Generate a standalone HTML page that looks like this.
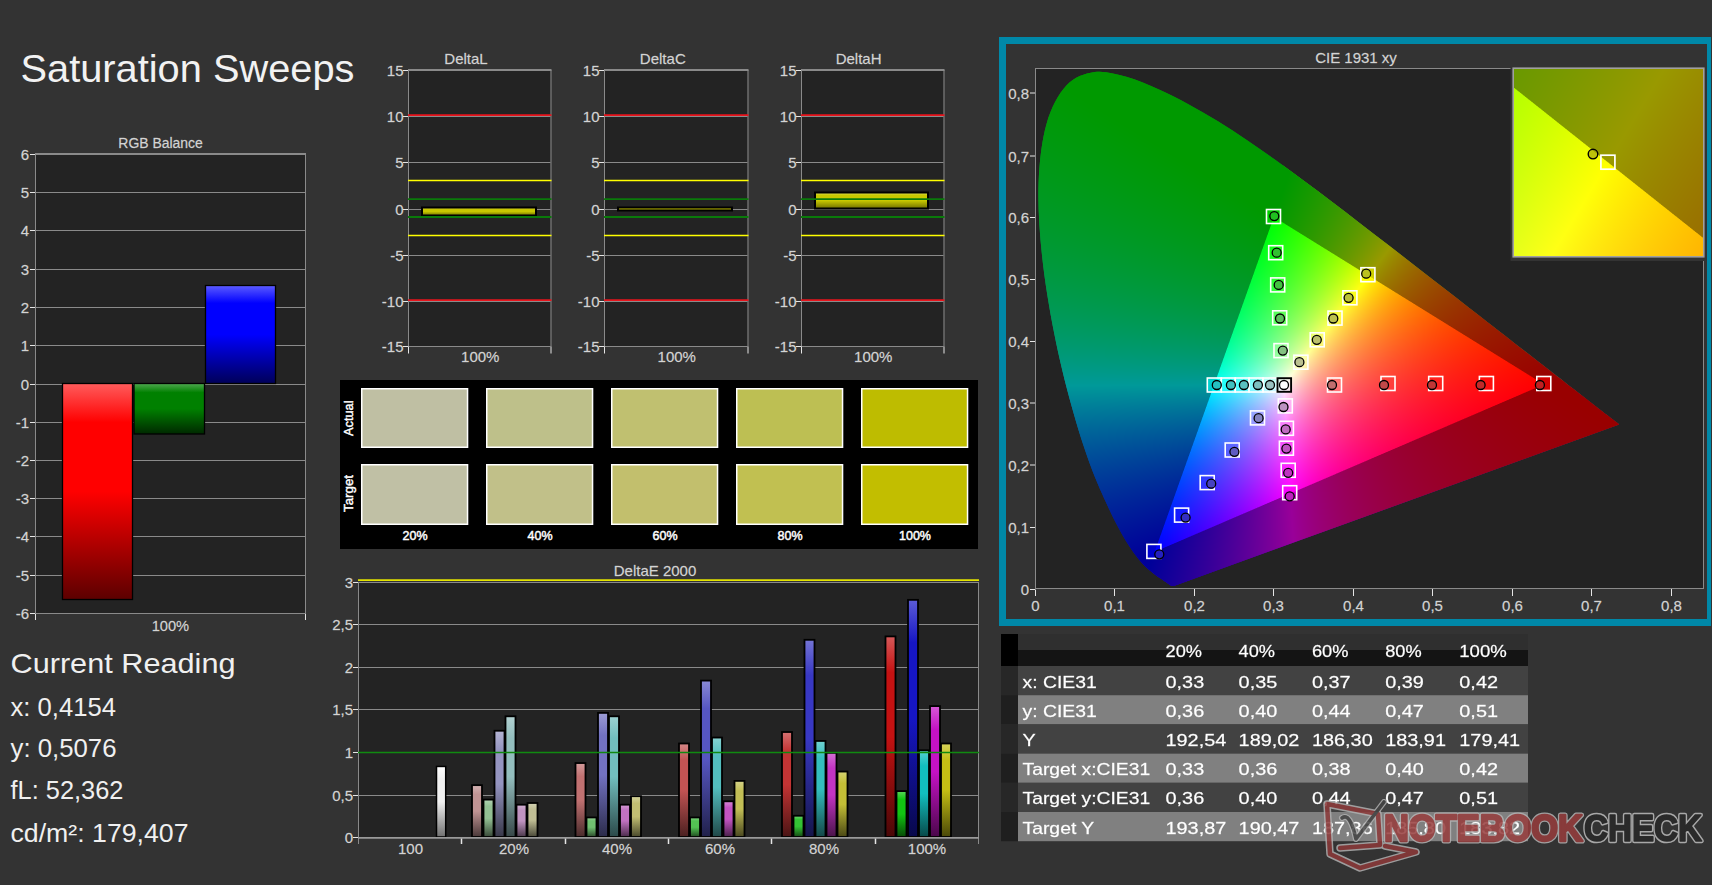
<!DOCTYPE html>
<html><head><meta charset="utf-8"><title>Saturation Sweeps</title>
<style>
html,body{margin:0;padding:0;background:#333333;width:1712px;height:885px;overflow:hidden;}
.layer{position:absolute;left:0;top:0;width:1712px;height:885px;}
svg text{font-family:"Liberation Sans", sans-serif;}
</style></head><body>
<svg class="layer" width="1712" height="885" viewBox="0 0 1712 885">
<defs><linearGradient id="g1" x1="0" y1="0" x2="0" y2="1"><stop offset="0" stop-color="#ff5c5c"/><stop offset="0.18" stop-color="#ff0000"/><stop offset="0.5" stop-color="#ff0000"/><stop offset="1" stop-color="#5c0000"/></linearGradient>
<linearGradient id="g2" x1="0" y1="0" x2="0" y2="1"><stop offset="0" stop-color="#50a850"/><stop offset="0.18" stop-color="#008000"/><stop offset="0.5" stop-color="#008000"/><stop offset="1" stop-color="#002800"/></linearGradient>
<linearGradient id="g3" x1="0" y1="0" x2="0" y2="1"><stop offset="0" stop-color="#5c5cff"/><stop offset="0.18" stop-color="#0000ff"/><stop offset="0.5" stop-color="#0000ff"/><stop offset="1" stop-color="#000058"/></linearGradient>
<linearGradient id="g4" x1="0" y1="0" x2="0" y2="1"><stop offset="0" stop-color="#e0e060"/><stop offset="0.18" stop-color="#c8c800"/><stop offset="0.5" stop-color="#c8c800"/><stop offset="1" stop-color="#707000"/></linearGradient>
<linearGradient id="g5" x1="0" y1="0" x2="0" y2="1"><stop offset="0" stop-color="#e0e060"/><stop offset="0.18" stop-color="#c8c800"/><stop offset="0.5" stop-color="#c8c800"/><stop offset="1" stop-color="#707000"/></linearGradient>
<linearGradient id="g6" x1="0" y1="0" x2="0" y2="1"><stop offset="0" stop-color="#e0e060"/><stop offset="0.18" stop-color="#c8c800"/><stop offset="0.5" stop-color="#c8c800"/><stop offset="1" stop-color="#707000"/></linearGradient>
<linearGradient id="g7" x1="0" y1="0" x2="0" y2="1"><stop offset="0" stop-color="#d3b3b3"/><stop offset="0.18" stop-color="#c09393"/><stop offset="0.5" stop-color="#c09393"/><stop offset="1" stop-color="#493838"/></linearGradient>
<linearGradient id="g8" x1="0" y1="0" x2="0" y2="1"><stop offset="0" stop-color="#b3d3b3"/><stop offset="0.18" stop-color="#93c093"/><stop offset="0.5" stop-color="#93c093"/><stop offset="1" stop-color="#384938"/></linearGradient>
<linearGradient id="g9" x1="0" y1="0" x2="0" y2="1"><stop offset="0" stop-color="#b4b4d3"/><stop offset="0.18" stop-color="#9494c0"/><stop offset="0.5" stop-color="#9494c0"/><stop offset="1" stop-color="#383849"/></linearGradient>
<linearGradient id="g10" x1="0" y1="0" x2="0" y2="1"><stop offset="0" stop-color="#b3d2d2"/><stop offset="0.18" stop-color="#93bebe"/><stop offset="0.5" stop-color="#93bebe"/><stop offset="1" stop-color="#384848"/></linearGradient>
<linearGradient id="g11" x1="0" y1="0" x2="0" y2="1"><stop offset="0" stop-color="#d3b3d3"/><stop offset="0.18" stop-color="#c093c0"/><stop offset="0.5" stop-color="#c093c0"/><stop offset="1" stop-color="#493849"/></linearGradient>
<linearGradient id="g12" x1="0" y1="0" x2="0" y2="1"><stop offset="0" stop-color="#d3d2b4"/><stop offset="0.18" stop-color="#c0be94"/><stop offset="0.5" stop-color="#c0be94"/><stop offset="1" stop-color="#494838"/></linearGradient>
<linearGradient id="g13" x1="0" y1="0" x2="0" y2="1"><stop offset="0" stop-color="#d49c9c"/><stop offset="0.18" stop-color="#c17171"/><stop offset="0.5" stop-color="#c17171"/><stop offset="1" stop-color="#492b2b"/></linearGradient>
<linearGradient id="g14" x1="0" y1="0" x2="0" y2="1"><stop offset="0" stop-color="#9cd49c"/><stop offset="0.18" stop-color="#71c171"/><stop offset="0.5" stop-color="#71c171"/><stop offset="1" stop-color="#2b492b"/></linearGradient>
<linearGradient id="g15" x1="0" y1="0" x2="0" y2="1"><stop offset="0" stop-color="#9c9cd4"/><stop offset="0.18" stop-color="#7272c1"/><stop offset="0.5" stop-color="#7272c1"/><stop offset="1" stop-color="#2b2b49"/></linearGradient>
<linearGradient id="g16" x1="0" y1="0" x2="0" y2="1"><stop offset="0" stop-color="#9cd2d2"/><stop offset="0.18" stop-color="#71bebe"/><stop offset="0.5" stop-color="#71bebe"/><stop offset="1" stop-color="#2b4848"/></linearGradient>
<linearGradient id="g17" x1="0" y1="0" x2="0" y2="1"><stop offset="0" stop-color="#d49cd4"/><stop offset="0.18" stop-color="#c171c1"/><stop offset="0.5" stop-color="#c171c1"/><stop offset="1" stop-color="#492b49"/></linearGradient>
<linearGradient id="g18" x1="0" y1="0" x2="0" y2="1"><stop offset="0" stop-color="#d4d29c"/><stop offset="0.18" stop-color="#c1be72"/><stop offset="0.5" stop-color="#c1be72"/><stop offset="1" stop-color="#49482b"/></linearGradient>
<linearGradient id="g19" x1="0" y1="0" x2="0" y2="1"><stop offset="0" stop-color="#d48787"/><stop offset="0.18" stop-color="#c25353"/><stop offset="0.5" stop-color="#c25353"/><stop offset="1" stop-color="#4a2020"/></linearGradient>
<linearGradient id="g20" x1="0" y1="0" x2="0" y2="1"><stop offset="0" stop-color="#87d487"/><stop offset="0.18" stop-color="#53c253"/><stop offset="0.5" stop-color="#53c253"/><stop offset="1" stop-color="#204a20"/></linearGradient>
<linearGradient id="g21" x1="0" y1="0" x2="0" y2="1"><stop offset="0" stop-color="#8989d4"/><stop offset="0.18" stop-color="#5656c2"/><stop offset="0.5" stop-color="#5656c2"/><stop offset="1" stop-color="#21214a"/></linearGradient>
<linearGradient id="g22" x1="0" y1="0" x2="0" y2="1"><stop offset="0" stop-color="#87d2d2"/><stop offset="0.18" stop-color="#53bebe"/><stop offset="0.5" stop-color="#53bebe"/><stop offset="1" stop-color="#204848"/></linearGradient>
<linearGradient id="g23" x1="0" y1="0" x2="0" y2="1"><stop offset="0" stop-color="#d487d4"/><stop offset="0.18" stop-color="#c253c2"/><stop offset="0.5" stop-color="#c253c2"/><stop offset="1" stop-color="#4a204a"/></linearGradient>
<linearGradient id="g24" x1="0" y1="0" x2="0" y2="1"><stop offset="0" stop-color="#d4d288"/><stop offset="0.18" stop-color="#c2be55"/><stop offset="0.5" stop-color="#c2be55"/><stop offset="1" stop-color="#4a4820"/></linearGradient>
<linearGradient id="g25" x1="0" y1="0" x2="0" y2="1"><stop offset="0" stop-color="#d57171"/><stop offset="0.18" stop-color="#c33434"/><stop offset="0.5" stop-color="#c33434"/><stop offset="1" stop-color="#4a1414"/></linearGradient>
<linearGradient id="g26" x1="0" y1="0" x2="0" y2="1"><stop offset="0" stop-color="#71d571"/><stop offset="0.18" stop-color="#34c334"/><stop offset="0.5" stop-color="#34c334"/><stop offset="1" stop-color="#144a14"/></linearGradient>
<linearGradient id="g27" x1="0" y1="0" x2="0" y2="1"><stop offset="0" stop-color="#7474d5"/><stop offset="0.18" stop-color="#3838c3"/><stop offset="0.5" stop-color="#3838c3"/><stop offset="1" stop-color="#15154a"/></linearGradient>
<linearGradient id="g28" x1="0" y1="0" x2="0" y2="1"><stop offset="0" stop-color="#71d2d2"/><stop offset="0.18" stop-color="#34bebe"/><stop offset="0.5" stop-color="#34bebe"/><stop offset="1" stop-color="#144848"/></linearGradient>
<linearGradient id="g29" x1="0" y1="0" x2="0" y2="1"><stop offset="0" stop-color="#d571d5"/><stop offset="0.18" stop-color="#c334c3"/><stop offset="0.5" stop-color="#c334c3"/><stop offset="1" stop-color="#4a144a"/></linearGradient>
<linearGradient id="g30" x1="0" y1="0" x2="0" y2="1"><stop offset="0" stop-color="#d5d272"/><stop offset="0.18" stop-color="#c3be36"/><stop offset="0.5" stop-color="#c3be36"/><stop offset="1" stop-color="#4a4815"/></linearGradient>
<linearGradient id="g31" x1="0" y1="0" x2="0" y2="1"><stop offset="0" stop-color="#d65959"/><stop offset="0.18" stop-color="#c41212"/><stop offset="0.5" stop-color="#c41212"/><stop offset="1" stop-color="#4a0707"/></linearGradient>
<linearGradient id="g32" x1="0" y1="0" x2="0" y2="1"><stop offset="0" stop-color="#59d659"/><stop offset="0.18" stop-color="#12c412"/><stop offset="0.5" stop-color="#12c412"/><stop offset="1" stop-color="#074a07"/></linearGradient>
<linearGradient id="g33" x1="0" y1="0" x2="0" y2="1"><stop offset="0" stop-color="#5c5cd6"/><stop offset="0.18" stop-color="#1616c4"/><stop offset="0.5" stop-color="#1616c4"/><stop offset="1" stop-color="#08084a"/></linearGradient>
<linearGradient id="g34" x1="0" y1="0" x2="0" y2="1"><stop offset="0" stop-color="#59d2d2"/><stop offset="0.18" stop-color="#12bebe"/><stop offset="0.5" stop-color="#12bebe"/><stop offset="1" stop-color="#074848"/></linearGradient>
<linearGradient id="g35" x1="0" y1="0" x2="0" y2="1"><stop offset="0" stop-color="#d659d6"/><stop offset="0.18" stop-color="#c412c4"/><stop offset="0.5" stop-color="#c412c4"/><stop offset="1" stop-color="#4a074a"/></linearGradient>
<linearGradient id="g36" x1="0" y1="0" x2="0" y2="1"><stop offset="0" stop-color="#d6d25a"/><stop offset="0.18" stop-color="#c4be14"/><stop offset="0.5" stop-color="#c4be14"/><stop offset="1" stop-color="#4a4808"/></linearGradient>
<linearGradient id="g37" x1="0" y1="0" x2="0" y2="1"><stop offset="0" stop-color="#ffffff"/><stop offset="0.18" stop-color="#f0f0f0"/><stop offset="0.5" stop-color="#f0f0f0"/><stop offset="1" stop-color="#707070"/></linearGradient></defs>
<text x="20.5" y="81.8" font-size="39.5" fill="#f2f2f2" text-anchor="start" font-weight="normal" textLength="334" lengthAdjust="spacingAndGlyphs">Saturation Sweeps</text>
<rect x="35" y="154" width="270" height="459" fill="#232323"/>
<line x1="35" y1="154.5" x2="305" y2="154.5" stroke="#8a8a8a" stroke-width="1"/>
<line x1="30" y1="154.5" x2="35" y2="154.5" stroke="#e6e6e6" stroke-width="1"/>
<text x="29" y="160.0" font-size="15" fill="#d4d4d4" text-anchor="end" font-weight="normal" stroke="#d4d4d4" stroke-width="0.3" stroke-opacity="0.7">6</text>
<line x1="35" y1="192.5" x2="305" y2="192.5" stroke="#8a8a8a" stroke-width="1"/>
<line x1="30" y1="192.5" x2="35" y2="192.5" stroke="#e6e6e6" stroke-width="1"/>
<text x="29" y="198.0" font-size="15" fill="#d4d4d4" text-anchor="end" font-weight="normal" stroke="#d4d4d4" stroke-width="0.3" stroke-opacity="0.7">5</text>
<line x1="35" y1="230.5" x2="305" y2="230.5" stroke="#8a8a8a" stroke-width="1"/>
<line x1="30" y1="230.5" x2="35" y2="230.5" stroke="#e6e6e6" stroke-width="1"/>
<text x="29" y="236.0" font-size="15" fill="#d4d4d4" text-anchor="end" font-weight="normal" stroke="#d4d4d4" stroke-width="0.3" stroke-opacity="0.7">4</text>
<line x1="35" y1="269.5" x2="305" y2="269.5" stroke="#8a8a8a" stroke-width="1"/>
<line x1="30" y1="269.5" x2="35" y2="269.5" stroke="#e6e6e6" stroke-width="1"/>
<text x="29" y="275.0" font-size="15" fill="#d4d4d4" text-anchor="end" font-weight="normal" stroke="#d4d4d4" stroke-width="0.3" stroke-opacity="0.7">3</text>
<line x1="35" y1="307.5" x2="305" y2="307.5" stroke="#8a8a8a" stroke-width="1"/>
<line x1="30" y1="307.5" x2="35" y2="307.5" stroke="#e6e6e6" stroke-width="1"/>
<text x="29" y="313.0" font-size="15" fill="#d4d4d4" text-anchor="end" font-weight="normal" stroke="#d4d4d4" stroke-width="0.3" stroke-opacity="0.7">2</text>
<line x1="35" y1="345.5" x2="305" y2="345.5" stroke="#8a8a8a" stroke-width="1"/>
<line x1="30" y1="345.5" x2="35" y2="345.5" stroke="#e6e6e6" stroke-width="1"/>
<text x="29" y="351.0" font-size="15" fill="#d4d4d4" text-anchor="end" font-weight="normal" stroke="#d4d4d4" stroke-width="0.3" stroke-opacity="0.7">1</text>
<line x1="35" y1="384.5" x2="305" y2="384.5" stroke="#8a8a8a" stroke-width="1"/>
<line x1="30" y1="384.5" x2="35" y2="384.5" stroke="#e6e6e6" stroke-width="1"/>
<text x="29" y="390.0" font-size="15" fill="#d4d4d4" text-anchor="end" font-weight="normal" stroke="#d4d4d4" stroke-width="0.3" stroke-opacity="0.7">0</text>
<line x1="35" y1="422.5" x2="305" y2="422.5" stroke="#8a8a8a" stroke-width="1"/>
<line x1="30" y1="422.5" x2="35" y2="422.5" stroke="#e6e6e6" stroke-width="1"/>
<text x="29" y="428.0" font-size="15" fill="#d4d4d4" text-anchor="end" font-weight="normal" stroke="#d4d4d4" stroke-width="0.3" stroke-opacity="0.7">-1</text>
<line x1="35" y1="460.5" x2="305" y2="460.5" stroke="#8a8a8a" stroke-width="1"/>
<line x1="30" y1="460.5" x2="35" y2="460.5" stroke="#e6e6e6" stroke-width="1"/>
<text x="29" y="466.0" font-size="15" fill="#d4d4d4" text-anchor="end" font-weight="normal" stroke="#d4d4d4" stroke-width="0.3" stroke-opacity="0.7">-2</text>
<line x1="35" y1="498.5" x2="305" y2="498.5" stroke="#8a8a8a" stroke-width="1"/>
<line x1="30" y1="498.5" x2="35" y2="498.5" stroke="#e6e6e6" stroke-width="1"/>
<text x="29" y="504.0" font-size="15" fill="#d4d4d4" text-anchor="end" font-weight="normal" stroke="#d4d4d4" stroke-width="0.3" stroke-opacity="0.7">-3</text>
<line x1="35" y1="536.5" x2="305" y2="536.5" stroke="#8a8a8a" stroke-width="1"/>
<line x1="30" y1="536.5" x2="35" y2="536.5" stroke="#e6e6e6" stroke-width="1"/>
<text x="29" y="542.0" font-size="15" fill="#d4d4d4" text-anchor="end" font-weight="normal" stroke="#d4d4d4" stroke-width="0.3" stroke-opacity="0.7">-4</text>
<line x1="35" y1="575.5" x2="305" y2="575.5" stroke="#8a8a8a" stroke-width="1"/>
<line x1="30" y1="575.5" x2="35" y2="575.5" stroke="#e6e6e6" stroke-width="1"/>
<text x="29" y="581.0" font-size="15" fill="#d4d4d4" text-anchor="end" font-weight="normal" stroke="#d4d4d4" stroke-width="0.3" stroke-opacity="0.7">-5</text>
<line x1="35" y1="613.5" x2="305" y2="613.5" stroke="#8a8a8a" stroke-width="1"/>
<line x1="30" y1="613.5" x2="35" y2="613.5" stroke="#e6e6e6" stroke-width="1"/>
<text x="29" y="619.0" font-size="15" fill="#d4d4d4" text-anchor="end" font-weight="normal" stroke="#d4d4d4" stroke-width="0.3" stroke-opacity="0.7">-6</text>
<line x1="35.5" y1="154" x2="35.5" y2="619" stroke="#8a8a8a" stroke-width="1"/>
<line x1="305.5" y1="154" x2="305.5" y2="614" stroke="#8a8a8a" stroke-width="1"/>
<line x1="35" y1="154" x2="306" y2="154" stroke="#8a8a8a" stroke-width="2"/>
<line x1="35.5" y1="614" x2="35.5" y2="620" stroke="#e6e6e6" stroke-width="1"/>
<line x1="305.5" y1="614" x2="305.5" y2="620" stroke="#e6e6e6" stroke-width="1"/>
<text x="160.6" y="147.7" font-size="14" fill="#d4d4d4" text-anchor="middle" font-weight="normal" textLength="84.5" lengthAdjust="spacingAndGlyphs" stroke="#d4d4d4" stroke-width="0.3" stroke-opacity="0.7">RGB Balance</text>
<text x="170.4" y="630.5" font-size="15" fill="#d4d4d4" text-anchor="middle" font-weight="normal" textLength="37.5" lengthAdjust="spacingAndGlyphs" stroke="#d4d4d4" stroke-width="0.3" stroke-opacity="0.7">100%</text>
<rect x="62.5" y="383.5" width="70" height="216.0" fill="url(#g1)" stroke="#000" stroke-width="1.3"/>
<rect x="134" y="383.5" width="70.5" height="50.5" fill="url(#g2)" stroke="#000" stroke-width="1.3"/>
<rect x="205.5" y="285.5" width="70" height="98.0" fill="url(#g3)" stroke="#000" stroke-width="1.3"/>
<rect x="408" y="70" width="142.5" height="276.5" fill="#232323"/>
<line x1="408" y1="70.5" x2="550.5" y2="70.5" stroke="#8a8a8a" stroke-width="1"/>
<line x1="403" y1="70.5" x2="408" y2="70.5" stroke="#e6e6e6" stroke-width="1"/>
<text x="403.5" y="76.0" font-size="15" fill="#d4d4d4" text-anchor="end" font-weight="normal" stroke="#d4d4d4" stroke-width="0.3" stroke-opacity="0.7">15</text>
<line x1="408" y1="116.5" x2="550.5" y2="116.5" stroke="#8a8a8a" stroke-width="1"/>
<line x1="403" y1="116.5" x2="408" y2="116.5" stroke="#e6e6e6" stroke-width="1"/>
<text x="403.5" y="122.0" font-size="15" fill="#d4d4d4" text-anchor="end" font-weight="normal" stroke="#d4d4d4" stroke-width="0.3" stroke-opacity="0.7">10</text>
<line x1="408" y1="162.5" x2="550.5" y2="162.5" stroke="#8a8a8a" stroke-width="1"/>
<line x1="403" y1="162.5" x2="408" y2="162.5" stroke="#e6e6e6" stroke-width="1"/>
<text x="403.5" y="168.0" font-size="15" fill="#d4d4d4" text-anchor="end" font-weight="normal" stroke="#d4d4d4" stroke-width="0.3" stroke-opacity="0.7">5</text>
<line x1="408" y1="209.5" x2="550.5" y2="209.5" stroke="#8a8a8a" stroke-width="1"/>
<line x1="403" y1="209.5" x2="408" y2="209.5" stroke="#e6e6e6" stroke-width="1"/>
<text x="403.5" y="215.0" font-size="15" fill="#d4d4d4" text-anchor="end" font-weight="normal" stroke="#d4d4d4" stroke-width="0.3" stroke-opacity="0.7">0</text>
<line x1="408" y1="255.5" x2="550.5" y2="255.5" stroke="#8a8a8a" stroke-width="1"/>
<line x1="403" y1="255.5" x2="408" y2="255.5" stroke="#e6e6e6" stroke-width="1"/>
<text x="403.5" y="261.0" font-size="15" fill="#d4d4d4" text-anchor="end" font-weight="normal" stroke="#d4d4d4" stroke-width="0.3" stroke-opacity="0.7">-5</text>
<line x1="408" y1="301.5" x2="550.5" y2="301.5" stroke="#8a8a8a" stroke-width="1"/>
<line x1="403" y1="301.5" x2="408" y2="301.5" stroke="#e6e6e6" stroke-width="1"/>
<text x="403.5" y="307.0" font-size="15" fill="#d4d4d4" text-anchor="end" font-weight="normal" stroke="#d4d4d4" stroke-width="0.3" stroke-opacity="0.7">-10</text>
<line x1="408" y1="346.5" x2="550.5" y2="346.5" stroke="#8a8a8a" stroke-width="1"/>
<line x1="403" y1="346.5" x2="408" y2="346.5" stroke="#e6e6e6" stroke-width="1"/>
<text x="403.5" y="352.0" font-size="15" fill="#d4d4d4" text-anchor="end" font-weight="normal" stroke="#d4d4d4" stroke-width="0.3" stroke-opacity="0.7">-15</text>
<line x1="408.5" y1="70" x2="408.5" y2="346.5" stroke="#8a8a8a" stroke-width="1"/>
<line x1="551.0" y1="70" x2="551.0" y2="346.5" stroke="#8a8a8a" stroke-width="1"/>
<line x1="408.5" y1="346.5" x2="408.5" y2="353.5" stroke="#e6e6e6" stroke-width="1"/>
<line x1="551.0" y1="346.5" x2="551.0" y2="353.5" stroke="#e6e6e6" stroke-width="1"/>
<line x1="408" y1="70" x2="551.5" y2="70" stroke="#8a8a8a" stroke-width="2"/>
<line x1="408" y1="115.2" x2="551.5" y2="115.2" stroke="#e8141c" stroke-width="1.7"/>
<line x1="408" y1="300.2" x2="551.5" y2="300.2" stroke="#e8141c" stroke-width="1.7"/>
<line x1="408" y1="180.5" x2="551.5" y2="180.5" stroke="#ffff00" stroke-width="1.7"/>
<line x1="408" y1="235.5" x2="551.5" y2="235.5" stroke="#ffff00" stroke-width="1.7"/>
<rect x="422" y="207.5" width="114" height="8.0" fill="url(#g4)" stroke="#000" stroke-width="2"/>
<line x1="408" y1="199.2" x2="551.5" y2="199.2" stroke="#0a7a0a" stroke-width="1.8"/>
<line x1="408" y1="217" x2="551.5" y2="217" stroke="#0a7a0a" stroke-width="1.8"/>
<text x="466" y="64" font-size="15" fill="#d4d4d4" text-anchor="middle" font-weight="normal" stroke="#d4d4d4" stroke-width="0.3" stroke-opacity="0.7">DeltaL</text>
<text x="480.25" y="362" font-size="15" fill="#d4d4d4" text-anchor="middle" font-weight="normal" stroke="#d4d4d4" stroke-width="0.3" stroke-opacity="0.7">100%</text>
<rect x="604" y="70" width="143.5" height="276.5" fill="#232323"/>
<line x1="604" y1="70.5" x2="747.5" y2="70.5" stroke="#8a8a8a" stroke-width="1"/>
<line x1="599" y1="70.5" x2="604" y2="70.5" stroke="#e6e6e6" stroke-width="1"/>
<text x="599.5" y="76.0" font-size="15" fill="#d4d4d4" text-anchor="end" font-weight="normal" stroke="#d4d4d4" stroke-width="0.3" stroke-opacity="0.7">15</text>
<line x1="604" y1="116.5" x2="747.5" y2="116.5" stroke="#8a8a8a" stroke-width="1"/>
<line x1="599" y1="116.5" x2="604" y2="116.5" stroke="#e6e6e6" stroke-width="1"/>
<text x="599.5" y="122.0" font-size="15" fill="#d4d4d4" text-anchor="end" font-weight="normal" stroke="#d4d4d4" stroke-width="0.3" stroke-opacity="0.7">10</text>
<line x1="604" y1="162.5" x2="747.5" y2="162.5" stroke="#8a8a8a" stroke-width="1"/>
<line x1="599" y1="162.5" x2="604" y2="162.5" stroke="#e6e6e6" stroke-width="1"/>
<text x="599.5" y="168.0" font-size="15" fill="#d4d4d4" text-anchor="end" font-weight="normal" stroke="#d4d4d4" stroke-width="0.3" stroke-opacity="0.7">5</text>
<line x1="604" y1="209.5" x2="747.5" y2="209.5" stroke="#8a8a8a" stroke-width="1"/>
<line x1="599" y1="209.5" x2="604" y2="209.5" stroke="#e6e6e6" stroke-width="1"/>
<text x="599.5" y="215.0" font-size="15" fill="#d4d4d4" text-anchor="end" font-weight="normal" stroke="#d4d4d4" stroke-width="0.3" stroke-opacity="0.7">0</text>
<line x1="604" y1="255.5" x2="747.5" y2="255.5" stroke="#8a8a8a" stroke-width="1"/>
<line x1="599" y1="255.5" x2="604" y2="255.5" stroke="#e6e6e6" stroke-width="1"/>
<text x="599.5" y="261.0" font-size="15" fill="#d4d4d4" text-anchor="end" font-weight="normal" stroke="#d4d4d4" stroke-width="0.3" stroke-opacity="0.7">-5</text>
<line x1="604" y1="301.5" x2="747.5" y2="301.5" stroke="#8a8a8a" stroke-width="1"/>
<line x1="599" y1="301.5" x2="604" y2="301.5" stroke="#e6e6e6" stroke-width="1"/>
<text x="599.5" y="307.0" font-size="15" fill="#d4d4d4" text-anchor="end" font-weight="normal" stroke="#d4d4d4" stroke-width="0.3" stroke-opacity="0.7">-10</text>
<line x1="604" y1="346.5" x2="747.5" y2="346.5" stroke="#8a8a8a" stroke-width="1"/>
<line x1="599" y1="346.5" x2="604" y2="346.5" stroke="#e6e6e6" stroke-width="1"/>
<text x="599.5" y="352.0" font-size="15" fill="#d4d4d4" text-anchor="end" font-weight="normal" stroke="#d4d4d4" stroke-width="0.3" stroke-opacity="0.7">-15</text>
<line x1="604.5" y1="70" x2="604.5" y2="346.5" stroke="#8a8a8a" stroke-width="1"/>
<line x1="748.0" y1="70" x2="748.0" y2="346.5" stroke="#8a8a8a" stroke-width="1"/>
<line x1="604.5" y1="346.5" x2="604.5" y2="353.5" stroke="#e6e6e6" stroke-width="1"/>
<line x1="748.0" y1="346.5" x2="748.0" y2="353.5" stroke="#e6e6e6" stroke-width="1"/>
<line x1="604" y1="70" x2="748.5" y2="70" stroke="#8a8a8a" stroke-width="2"/>
<line x1="604" y1="115.2" x2="748.5" y2="115.2" stroke="#e8141c" stroke-width="1.7"/>
<line x1="604" y1="300.2" x2="748.5" y2="300.2" stroke="#e8141c" stroke-width="1.7"/>
<line x1="604" y1="180.5" x2="748.5" y2="180.5" stroke="#ffff00" stroke-width="1.7"/>
<line x1="604" y1="235.5" x2="748.5" y2="235.5" stroke="#ffff00" stroke-width="1.7"/>
<rect x="618" y="207.5" width="114" height="3.0" fill="url(#g5)" stroke="#000" stroke-width="2"/>
<line x1="604" y1="199.2" x2="748.5" y2="199.2" stroke="#0a7a0a" stroke-width="1.8"/>
<line x1="604" y1="217" x2="748.5" y2="217" stroke="#0a7a0a" stroke-width="1.8"/>
<text x="662.8" y="64" font-size="15" fill="#d4d4d4" text-anchor="middle" font-weight="normal" stroke="#d4d4d4" stroke-width="0.3" stroke-opacity="0.7">DeltaC</text>
<text x="676.75" y="362" font-size="15" fill="#d4d4d4" text-anchor="middle" font-weight="normal" stroke="#d4d4d4" stroke-width="0.3" stroke-opacity="0.7">100%</text>
<rect x="801" y="70" width="142.5" height="276.5" fill="#232323"/>
<line x1="801" y1="70.5" x2="943.5" y2="70.5" stroke="#8a8a8a" stroke-width="1"/>
<line x1="796" y1="70.5" x2="801" y2="70.5" stroke="#e6e6e6" stroke-width="1"/>
<text x="796.5" y="76.0" font-size="15" fill="#d4d4d4" text-anchor="end" font-weight="normal" stroke="#d4d4d4" stroke-width="0.3" stroke-opacity="0.7">15</text>
<line x1="801" y1="116.5" x2="943.5" y2="116.5" stroke="#8a8a8a" stroke-width="1"/>
<line x1="796" y1="116.5" x2="801" y2="116.5" stroke="#e6e6e6" stroke-width="1"/>
<text x="796.5" y="122.0" font-size="15" fill="#d4d4d4" text-anchor="end" font-weight="normal" stroke="#d4d4d4" stroke-width="0.3" stroke-opacity="0.7">10</text>
<line x1="801" y1="162.5" x2="943.5" y2="162.5" stroke="#8a8a8a" stroke-width="1"/>
<line x1="796" y1="162.5" x2="801" y2="162.5" stroke="#e6e6e6" stroke-width="1"/>
<text x="796.5" y="168.0" font-size="15" fill="#d4d4d4" text-anchor="end" font-weight="normal" stroke="#d4d4d4" stroke-width="0.3" stroke-opacity="0.7">5</text>
<line x1="801" y1="209.5" x2="943.5" y2="209.5" stroke="#8a8a8a" stroke-width="1"/>
<line x1="796" y1="209.5" x2="801" y2="209.5" stroke="#e6e6e6" stroke-width="1"/>
<text x="796.5" y="215.0" font-size="15" fill="#d4d4d4" text-anchor="end" font-weight="normal" stroke="#d4d4d4" stroke-width="0.3" stroke-opacity="0.7">0</text>
<line x1="801" y1="255.5" x2="943.5" y2="255.5" stroke="#8a8a8a" stroke-width="1"/>
<line x1="796" y1="255.5" x2="801" y2="255.5" stroke="#e6e6e6" stroke-width="1"/>
<text x="796.5" y="261.0" font-size="15" fill="#d4d4d4" text-anchor="end" font-weight="normal" stroke="#d4d4d4" stroke-width="0.3" stroke-opacity="0.7">-5</text>
<line x1="801" y1="301.5" x2="943.5" y2="301.5" stroke="#8a8a8a" stroke-width="1"/>
<line x1="796" y1="301.5" x2="801" y2="301.5" stroke="#e6e6e6" stroke-width="1"/>
<text x="796.5" y="307.0" font-size="15" fill="#d4d4d4" text-anchor="end" font-weight="normal" stroke="#d4d4d4" stroke-width="0.3" stroke-opacity="0.7">-10</text>
<line x1="801" y1="346.5" x2="943.5" y2="346.5" stroke="#8a8a8a" stroke-width="1"/>
<line x1="796" y1="346.5" x2="801" y2="346.5" stroke="#e6e6e6" stroke-width="1"/>
<text x="796.5" y="352.0" font-size="15" fill="#d4d4d4" text-anchor="end" font-weight="normal" stroke="#d4d4d4" stroke-width="0.3" stroke-opacity="0.7">-15</text>
<line x1="801.5" y1="70" x2="801.5" y2="346.5" stroke="#8a8a8a" stroke-width="1"/>
<line x1="944.0" y1="70" x2="944.0" y2="346.5" stroke="#8a8a8a" stroke-width="1"/>
<line x1="801.5" y1="346.5" x2="801.5" y2="353.5" stroke="#e6e6e6" stroke-width="1"/>
<line x1="944.0" y1="346.5" x2="944.0" y2="353.5" stroke="#e6e6e6" stroke-width="1"/>
<line x1="801" y1="70" x2="944.5" y2="70" stroke="#8a8a8a" stroke-width="2"/>
<line x1="801" y1="115.2" x2="944.5" y2="115.2" stroke="#e8141c" stroke-width="1.7"/>
<line x1="801" y1="300.2" x2="944.5" y2="300.2" stroke="#e8141c" stroke-width="1.7"/>
<line x1="801" y1="180.5" x2="944.5" y2="180.5" stroke="#ffff00" stroke-width="1.7"/>
<line x1="801" y1="235.5" x2="944.5" y2="235.5" stroke="#ffff00" stroke-width="1.7"/>
<rect x="815" y="192.5" width="113" height="16.0" fill="url(#g6)" stroke="#000" stroke-width="2"/>
<line x1="801" y1="199.2" x2="944.5" y2="199.2" stroke="#0a7a0a" stroke-width="1.8"/>
<line x1="801" y1="217" x2="944.5" y2="217" stroke="#0a7a0a" stroke-width="1.8"/>
<text x="858.6" y="64" font-size="15" fill="#d4d4d4" text-anchor="middle" font-weight="normal" stroke="#d4d4d4" stroke-width="0.3" stroke-opacity="0.7">DeltaH</text>
<text x="873.25" y="362" font-size="15" fill="#d4d4d4" text-anchor="middle" font-weight="normal" stroke="#d4d4d4" stroke-width="0.3" stroke-opacity="0.7">100%</text>
<rect x="340" y="380" width="638" height="169" fill="#000000"/>
<rect x="361.75" y="388.75" width="105.8" height="58.5" fill="#bfbfa3" stroke="#ffffff" stroke-width="1.5"/>
<rect x="361.75" y="464.75" width="105.8" height="59.5" fill="#c0c0a5" stroke="#ffffff" stroke-width="1.5"/>
<text x="415" y="540" font-size="12.5" fill="#ffffff" text-anchor="middle" font-weight="normal" stroke="#ffffff" stroke-width="0.45">20%</text>
<rect x="486.75" y="388.75" width="105.8" height="58.5" fill="#bec08a" stroke="#ffffff" stroke-width="1.5"/>
<rect x="486.75" y="464.75" width="105.8" height="59.5" fill="#c1c089" stroke="#ffffff" stroke-width="1.5"/>
<text x="540" y="540" font-size="12.5" fill="#ffffff" text-anchor="middle" font-weight="normal" stroke="#ffffff" stroke-width="0.45">40%</text>
<rect x="611.75" y="388.75" width="105.8" height="58.5" fill="#c0c070" stroke="#ffffff" stroke-width="1.5"/>
<rect x="611.75" y="464.75" width="105.8" height="59.5" fill="#c2bf6d" stroke="#ffffff" stroke-width="1.5"/>
<text x="665" y="540" font-size="12.5" fill="#ffffff" text-anchor="middle" font-weight="normal" stroke="#ffffff" stroke-width="0.45">60%</text>
<rect x="736.75" y="388.75" width="105.8" height="58.5" fill="#bdbf53" stroke="#ffffff" stroke-width="1.5"/>
<rect x="736.75" y="464.75" width="105.8" height="59.5" fill="#c1c051" stroke="#ffffff" stroke-width="1.5"/>
<text x="790" y="540" font-size="12.5" fill="#ffffff" text-anchor="middle" font-weight="normal" stroke="#ffffff" stroke-width="0.45">80%</text>
<rect x="861.75" y="388.75" width="105.8" height="58.5" fill="#bebc00" stroke="#ffffff" stroke-width="1.5"/>
<rect x="861.75" y="464.75" width="105.8" height="59.5" fill="#c2be00" stroke="#ffffff" stroke-width="1.5"/>
<text x="915" y="540" font-size="12.5" fill="#ffffff" text-anchor="middle" font-weight="normal" stroke="#ffffff" stroke-width="0.45">100%</text>
<text transform="translate(353,436) rotate(-90)" font-size="13" fill="#ffffff" stroke="#ffffff" stroke-width="0.4" textLength="35.5" lengthAdjust="spacingAndGlyphs">Actual</text>
<text transform="translate(353,512) rotate(-90)" font-size="13" fill="#ffffff" stroke="#ffffff" stroke-width="0.4" textLength="37" lengthAdjust="spacingAndGlyphs">Target</text>
<rect x="358" y="582" width="620" height="255" fill="#232323"/>
<line x1="358" y1="582.5" x2="978" y2="582.5" stroke="#8a8a8a" stroke-width="1"/>
<line x1="353" y1="582.5" x2="358" y2="582.5" stroke="#e6e6e6" stroke-width="1"/>
<text x="353" y="588.0" font-size="15" fill="#d4d4d4" text-anchor="end" font-weight="normal" stroke="#d4d4d4" stroke-width="0.3" stroke-opacity="0.7">3</text>
<line x1="358" y1="624.5" x2="978" y2="624.5" stroke="#8a8a8a" stroke-width="1"/>
<line x1="353" y1="624.5" x2="358" y2="624.5" stroke="#e6e6e6" stroke-width="1"/>
<text x="353" y="630.0" font-size="15" fill="#d4d4d4" text-anchor="end" font-weight="normal" stroke="#d4d4d4" stroke-width="0.3" stroke-opacity="0.7">2,5</text>
<line x1="358" y1="667.5" x2="978" y2="667.5" stroke="#8a8a8a" stroke-width="1"/>
<line x1="353" y1="667.5" x2="358" y2="667.5" stroke="#e6e6e6" stroke-width="1"/>
<text x="353" y="673.0" font-size="15" fill="#d4d4d4" text-anchor="end" font-weight="normal" stroke="#d4d4d4" stroke-width="0.3" stroke-opacity="0.7">2</text>
<line x1="358" y1="709.5" x2="978" y2="709.5" stroke="#8a8a8a" stroke-width="1"/>
<line x1="353" y1="709.5" x2="358" y2="709.5" stroke="#e6e6e6" stroke-width="1"/>
<text x="353" y="715.0" font-size="15" fill="#d4d4d4" text-anchor="end" font-weight="normal" stroke="#d4d4d4" stroke-width="0.3" stroke-opacity="0.7">1,5</text>
<line x1="358" y1="752.5" x2="978" y2="752.5" stroke="#8a8a8a" stroke-width="1"/>
<line x1="353" y1="752.5" x2="358" y2="752.5" stroke="#e6e6e6" stroke-width="1"/>
<text x="353" y="758.0" font-size="15" fill="#d4d4d4" text-anchor="end" font-weight="normal" stroke="#d4d4d4" stroke-width="0.3" stroke-opacity="0.7">1</text>
<line x1="358" y1="795.5" x2="978" y2="795.5" stroke="#8a8a8a" stroke-width="1"/>
<line x1="353" y1="795.5" x2="358" y2="795.5" stroke="#e6e6e6" stroke-width="1"/>
<text x="353" y="801.0" font-size="15" fill="#d4d4d4" text-anchor="end" font-weight="normal" stroke="#d4d4d4" stroke-width="0.3" stroke-opacity="0.7">0,5</text>
<line x1="358" y1="837.5" x2="978" y2="837.5" stroke="#8a8a8a" stroke-width="1"/>
<line x1="353" y1="837.5" x2="358" y2="837.5" stroke="#e6e6e6" stroke-width="1"/>
<text x="353" y="843.0" font-size="15" fill="#d4d4d4" text-anchor="end" font-weight="normal" stroke="#d4d4d4" stroke-width="0.3" stroke-opacity="0.7">0</text>
<line x1="358.5" y1="582" x2="358.5" y2="844" stroke="#8a8a8a" stroke-width="1"/>
<line x1="978.5" y1="582" x2="978.5" y2="844" stroke="#8a8a8a" stroke-width="1"/>
<line x1="461.5" y1="837" x2="461.5" y2="844" stroke="#e6e6e6" stroke-width="1.5"/>
<line x1="565.5" y1="837" x2="565.5" y2="844" stroke="#e6e6e6" stroke-width="1.5"/>
<line x1="668.5" y1="837" x2="668.5" y2="844" stroke="#e6e6e6" stroke-width="1.5"/>
<line x1="771.5" y1="837" x2="771.5" y2="844" stroke="#e6e6e6" stroke-width="1.5"/>
<line x1="875.5" y1="837" x2="875.5" y2="844" stroke="#e6e6e6" stroke-width="1.5"/>
<line x1="358" y1="580.2" x2="979" y2="580.2" stroke="#e4e400" stroke-width="1.8"/>
<text x="655" y="576" font-size="15" fill="#d4d4d4" text-anchor="middle" font-weight="normal" stroke="#d4d4d4" stroke-width="0.3" stroke-opacity="0.7">DeltaE 2000</text>
<text x="410.5" y="853.5" font-size="15" fill="#d4d4d4" text-anchor="middle" font-weight="normal" stroke="#d4d4d4" stroke-width="0.3" stroke-opacity="0.7">100</text>
<text x="514" y="853.5" font-size="15" fill="#d4d4d4" text-anchor="middle" font-weight="normal" stroke="#d4d4d4" stroke-width="0.3" stroke-opacity="0.7">20%</text>
<text x="617" y="853.5" font-size="15" fill="#d4d4d4" text-anchor="middle" font-weight="normal" stroke="#d4d4d4" stroke-width="0.3" stroke-opacity="0.7">40%</text>
<text x="720" y="853.5" font-size="15" fill="#d4d4d4" text-anchor="middle" font-weight="normal" stroke="#d4d4d4" stroke-width="0.3" stroke-opacity="0.7">60%</text>
<text x="824" y="853.5" font-size="15" fill="#d4d4d4" text-anchor="middle" font-weight="normal" stroke="#d4d4d4" stroke-width="0.3" stroke-opacity="0.7">80%</text>
<text x="927" y="853.5" font-size="15" fill="#d4d4d4" text-anchor="middle" font-weight="normal" stroke="#d4d4d4" stroke-width="0.3" stroke-opacity="0.7">100%</text>
<rect x="472.0" y="785.15" width="10" height="51.85000000000002" fill="url(#g7)" stroke="#000" stroke-width="1.8"/>
<rect x="483.5" y="799.6" width="10" height="37.39999999999998" fill="url(#g8)" stroke="#000" stroke-width="1.8"/>
<rect x="494.5" y="730.75" width="10" height="106.25" fill="url(#g9)" stroke="#000" stroke-width="1.8"/>
<rect x="505.5" y="716.3" width="10" height="120.70000000000005" fill="url(#g10)" stroke="#000" stroke-width="1.8"/>
<rect x="516.5" y="804.7" width="10" height="32.299999999999955" fill="url(#g11)" stroke="#000" stroke-width="1.8"/>
<rect x="527.5" y="803.0" width="10" height="34.0" fill="url(#g12)" stroke="#000" stroke-width="1.8"/>
<rect x="575.5" y="763.05" width="10" height="73.95000000000005" fill="url(#g13)" stroke="#000" stroke-width="1.8"/>
<rect x="586.5" y="817.45" width="10" height="19.549999999999955" fill="url(#g14)" stroke="#000" stroke-width="1.8"/>
<rect x="598.0" y="712.9" width="10" height="124.10000000000002" fill="url(#g15)" stroke="#000" stroke-width="1.8"/>
<rect x="609.0" y="716.3" width="10" height="120.70000000000005" fill="url(#g16)" stroke="#000" stroke-width="1.8"/>
<rect x="620.0" y="804.7" width="10" height="32.299999999999955" fill="url(#g17)" stroke="#000" stroke-width="1.8"/>
<rect x="631.0" y="796.2" width="10" height="40.799999999999955" fill="url(#g18)" stroke="#000" stroke-width="1.8"/>
<rect x="679.0" y="743.5" width="10" height="93.5" fill="url(#g19)" stroke="#000" stroke-width="1.8"/>
<rect x="690.0" y="817.45" width="10" height="19.549999999999955" fill="url(#g20)" stroke="#000" stroke-width="1.8"/>
<rect x="701.0" y="680.6" width="10" height="156.39999999999998" fill="url(#g21)" stroke="#000" stroke-width="1.8"/>
<rect x="712.0" y="737.55" width="10" height="99.45000000000005" fill="url(#g22)" stroke="#000" stroke-width="1.8"/>
<rect x="723.5" y="801.3" width="10" height="35.700000000000045" fill="url(#g23)" stroke="#000" stroke-width="1.8"/>
<rect x="734.5" y="780.9" width="10" height="56.10000000000002" fill="url(#g24)" stroke="#000" stroke-width="1.8"/>
<rect x="782.0" y="732.025" width="10" height="104.97500000000002" fill="url(#g25)" stroke="#000" stroke-width="1.8"/>
<rect x="793.5" y="815.75" width="10" height="21.25" fill="url(#g26)" stroke="#000" stroke-width="1.8"/>
<rect x="804.5" y="639.8" width="10" height="197.20000000000005" fill="url(#g27)" stroke="#000" stroke-width="1.8"/>
<rect x="815.5" y="740.95" width="10" height="96.04999999999995" fill="url(#g28)" stroke="#000" stroke-width="1.8"/>
<rect x="826.5" y="752.85" width="10" height="84.14999999999998" fill="url(#g29)" stroke="#000" stroke-width="1.8"/>
<rect x="837.5" y="771.55" width="10" height="65.45000000000005" fill="url(#g30)" stroke="#000" stroke-width="1.8"/>
<rect x="885.5" y="636.4" width="10" height="200.60000000000002" fill="url(#g31)" stroke="#000" stroke-width="1.8"/>
<rect x="896.5" y="791.1" width="10" height="45.89999999999998" fill="url(#g32)" stroke="#000" stroke-width="1.8"/>
<rect x="908.0" y="599.85" width="10" height="237.14999999999998" fill="url(#g33)" stroke="#000" stroke-width="1.8"/>
<rect x="919.0" y="750.3" width="10" height="86.70000000000005" fill="url(#g34)" stroke="#000" stroke-width="1.8"/>
<rect x="930.0" y="706.1" width="10" height="130.89999999999998" fill="url(#g35)" stroke="#000" stroke-width="1.8"/>
<rect x="941.0" y="743.5" width="10" height="93.5" fill="url(#g36)" stroke="#000" stroke-width="1.8"/>
<rect x="436.5" y="766.45" width="9.2" height="70.54999999999995" fill="url(#g37)" stroke="#000" stroke-width="1.5"/>
<line x1="358" y1="752.5" x2="979" y2="752.5" stroke="#108a10" stroke-width="1.6"/>
<line x1="358" y1="837.8" x2="979" y2="837.8" stroke="#9a9a9a" stroke-width="1.8"/>
<text x="10.5" y="673.2" font-size="28" fill="#f0f0f0" text-anchor="start" font-weight="normal" textLength="225" lengthAdjust="spacingAndGlyphs">Current Reading</text>
<text x="10.5" y="715.8" font-size="25" fill="#f0f0f0" text-anchor="start" font-weight="normal" textLength="105.5" lengthAdjust="spacingAndGlyphs">x: 0,4154</text>
<text x="10.5" y="757.3" font-size="25" fill="#f0f0f0" text-anchor="start" font-weight="normal" textLength="106" lengthAdjust="spacingAndGlyphs">y: 0,5076</text>
<text x="10.5" y="799.4" font-size="25" fill="#f0f0f0" text-anchor="start" font-weight="normal" textLength="113" lengthAdjust="spacingAndGlyphs">fL: 52,362</text>
<text x="10.5" y="841.7" font-size="25" fill="#f0f0f0" text-anchor="start" font-weight="normal" textLength="178" lengthAdjust="spacingAndGlyphs">cd/m²: 179,407</text>
<rect x="999" y="37" width="712" height="7" fill="#0088a8"/>
<rect x="999" y="619" width="712" height="7" fill="#0088a8"/>
<rect x="999" y="37" width="7" height="589" fill="#0088a8"/>
<rect x="1707" y="37" width="4" height="589" fill="#0088a8"/>
<rect x="1035.5" y="68" width="668" height="521" fill="#232323"/>
<text x="1356" y="62.5" font-size="15" fill="#d4d4d4" text-anchor="middle" font-weight="normal" stroke="#d4d4d4" stroke-width="0.3" stroke-opacity="0.7">CIE 1931 xy</text>
<line x1="1035.5" y1="589" x2="1035.5" y2="596" stroke="#e6e6e6" stroke-width="1"/>
<text x="1035.5" y="611" font-size="15" fill="#d4d4d4" text-anchor="middle" font-weight="normal" stroke="#d4d4d4" stroke-width="0.3" stroke-opacity="0.7">0</text>
<line x1="1114.5" y1="589" x2="1114.5" y2="596" stroke="#e6e6e6" stroke-width="1"/>
<text x="1114.5" y="611" font-size="15" fill="#d4d4d4" text-anchor="middle" font-weight="normal" stroke="#d4d4d4" stroke-width="0.3" stroke-opacity="0.7">0,1</text>
<line x1="1194.5" y1="589" x2="1194.5" y2="596" stroke="#e6e6e6" stroke-width="1"/>
<text x="1194.5" y="611" font-size="15" fill="#d4d4d4" text-anchor="middle" font-weight="normal" stroke="#d4d4d4" stroke-width="0.3" stroke-opacity="0.7">0,2</text>
<line x1="1273.5" y1="589" x2="1273.5" y2="596" stroke="#e6e6e6" stroke-width="1"/>
<text x="1273.5" y="611" font-size="15" fill="#d4d4d4" text-anchor="middle" font-weight="normal" stroke="#d4d4d4" stroke-width="0.3" stroke-opacity="0.7">0,3</text>
<line x1="1353.5" y1="589" x2="1353.5" y2="596" stroke="#e6e6e6" stroke-width="1"/>
<text x="1353.5" y="611" font-size="15" fill="#d4d4d4" text-anchor="middle" font-weight="normal" stroke="#d4d4d4" stroke-width="0.3" stroke-opacity="0.7">0,4</text>
<line x1="1432.5" y1="589" x2="1432.5" y2="596" stroke="#e6e6e6" stroke-width="1"/>
<text x="1432.5" y="611" font-size="15" fill="#d4d4d4" text-anchor="middle" font-weight="normal" stroke="#d4d4d4" stroke-width="0.3" stroke-opacity="0.7">0,5</text>
<line x1="1512.5" y1="589" x2="1512.5" y2="596" stroke="#e6e6e6" stroke-width="1"/>
<text x="1512.5" y="611" font-size="15" fill="#d4d4d4" text-anchor="middle" font-weight="normal" stroke="#d4d4d4" stroke-width="0.3" stroke-opacity="0.7">0,6</text>
<line x1="1591.5" y1="589" x2="1591.5" y2="596" stroke="#e6e6e6" stroke-width="1"/>
<text x="1591.5" y="611" font-size="15" fill="#d4d4d4" text-anchor="middle" font-weight="normal" stroke="#d4d4d4" stroke-width="0.3" stroke-opacity="0.7">0,7</text>
<line x1="1671.5" y1="589" x2="1671.5" y2="596" stroke="#e6e6e6" stroke-width="1"/>
<text x="1671.5" y="611" font-size="15" fill="#d4d4d4" text-anchor="middle" font-weight="normal" stroke="#d4d4d4" stroke-width="0.3" stroke-opacity="0.7">0,8</text>
<line x1="1030" y1="589.5" x2="1035.5" y2="589.5" stroke="#e6e6e6" stroke-width="1"/>
<text x="1029" y="595.0" font-size="15" fill="#d4d4d4" text-anchor="end" font-weight="normal" stroke="#d4d4d4" stroke-width="0.3" stroke-opacity="0.7">0</text>
<line x1="1030" y1="527.5" x2="1035.5" y2="527.5" stroke="#e6e6e6" stroke-width="1"/>
<text x="1029" y="533.0" font-size="15" fill="#d4d4d4" text-anchor="end" font-weight="normal" stroke="#d4d4d4" stroke-width="0.3" stroke-opacity="0.7">0,1</text>
<line x1="1030" y1="465" x2="1035.5" y2="465" stroke="#e6e6e6" stroke-width="1"/>
<text x="1029" y="470.5" font-size="15" fill="#d4d4d4" text-anchor="end" font-weight="normal" stroke="#d4d4d4" stroke-width="0.3" stroke-opacity="0.7">0,2</text>
<line x1="1030" y1="403" x2="1035.5" y2="403" stroke="#e6e6e6" stroke-width="1"/>
<text x="1029" y="408.5" font-size="15" fill="#d4d4d4" text-anchor="end" font-weight="normal" stroke="#d4d4d4" stroke-width="0.3" stroke-opacity="0.7">0,3</text>
<line x1="1030" y1="341.5" x2="1035.5" y2="341.5" stroke="#e6e6e6" stroke-width="1"/>
<text x="1029" y="347.0" font-size="15" fill="#d4d4d4" text-anchor="end" font-weight="normal" stroke="#d4d4d4" stroke-width="0.3" stroke-opacity="0.7">0,4</text>
<line x1="1030" y1="279.5" x2="1035.5" y2="279.5" stroke="#e6e6e6" stroke-width="1"/>
<text x="1029" y="285.0" font-size="15" fill="#d4d4d4" text-anchor="end" font-weight="normal" stroke="#d4d4d4" stroke-width="0.3" stroke-opacity="0.7">0,5</text>
<line x1="1030" y1="217.5" x2="1035.5" y2="217.5" stroke="#e6e6e6" stroke-width="1"/>
<text x="1029" y="223.0" font-size="15" fill="#d4d4d4" text-anchor="end" font-weight="normal" stroke="#d4d4d4" stroke-width="0.3" stroke-opacity="0.7">0,6</text>
<line x1="1030" y1="156" x2="1035.5" y2="156" stroke="#e6e6e6" stroke-width="1"/>
<text x="1029" y="161.5" font-size="15" fill="#d4d4d4" text-anchor="end" font-weight="normal" stroke="#d4d4d4" stroke-width="0.3" stroke-opacity="0.7">0,7</text>
<line x1="1030" y1="93" x2="1035.5" y2="93" stroke="#e6e6e6" stroke-width="1"/>
<text x="1029" y="98.5" font-size="15" fill="#d4d4d4" text-anchor="end" font-weight="normal" stroke="#d4d4d4" stroke-width="0.3" stroke-opacity="0.7">0,8</text>
<line x1="1035.5" y1="68" x2="1035.5" y2="590" stroke="#8a8a8a" stroke-width="1"/>
<line x1="1035" y1="588.5" x2="1704" y2="588.5" stroke="#8a8a8a" stroke-width="1"/>
<line x1="1703.5" y1="68" x2="1703.5" y2="589" stroke="#8a8a8a" stroke-width="1"/>
<line x1="1035" y1="68.5" x2="1513" y2="68.5" stroke="#8a8a8a" stroke-width="1"/>
<rect x="1510.5" y="66" width="196" height="195" fill="#333333"/>
</svg>
<svg class="layer" width="1712" height="885" viewBox="0 0 1712 885">
<defs><linearGradient id="fbv" x1="0" y1="68" x2="0" y2="589" gradientUnits="userSpaceOnUse"><stop offset="0" stop-color="#009600"/><stop offset="0.45" stop-color="#009650"/><stop offset="0.6" stop-color="#009a9a"/><stop offset="0.8" stop-color="#0030a0"/><stop offset="1" stop-color="#1800a0"/></linearGradient><linearGradient id="fbr" x1="1273" y1="0" x2="1620" y2="0" gradientUnits="userSpaceOnUse"><stop offset="0" stop-color="#309600"/><stop offset="0.3" stop-color="#8a8a00"/><stop offset="0.6" stop-color="#993000"/><stop offset="1" stop-color="#990000"/></linearGradient><linearGradient id="fbb" x1="1150" y1="0" x2="1620" y2="0" gradientUnits="userSpaceOnUse"><stop offset="0" stop-color="#1800a0"/><stop offset="0.4" stop-color="#800090"/><stop offset="1" stop-color="#990000"/></linearGradient><linearGradient id="fbt" x1="1160" y1="0" x2="1545" y2="0" gradientUnits="userSpaceOnUse"><stop offset="0" stop-color="#2060ff"/><stop offset="0.3" stop-color="#60ffd0"/><stop offset="0.5" stop-color="#ffffff"/><stop offset="1" stop-color="#ff1010"/></linearGradient></defs>
<path d="M1173.8,585.9 C1173.8,585.9 1173.7,585.9 1173.6,586.0 C1173.5,586.0 1173.3,586.0 1173.2,586.0 C1173.0,586.0 1172.9,586.1 1172.6,586.0 C1172.4,586.0 1172.0,585.9 1171.7,585.8 C1171.4,585.7 1171.1,585.6 1170.8,585.4 C1170.5,585.2 1170.1,585.0 1169.7,584.7 C1169.2,584.4 1168.7,584.1 1168.1,583.7 C1167.5,583.3 1166.9,582.8 1166.1,582.2 C1165.3,581.7 1164.5,581.1 1163.5,580.4 C1162.5,579.7 1161.3,578.9 1159.9,578.0 C1158.6,577.1 1157.1,576.2 1155.5,574.9 C1153.8,573.7 1152.0,572.4 1149.9,570.6 C1147.9,568.8 1145.8,567.2 1143.2,564.3 C1140.5,561.4 1137.5,558.0 1134.1,553.2 C1130.7,548.3 1126.9,542.9 1122.6,535.2 C1118.2,527.4 1113.5,518.5 1108.0,506.7 C1102.6,495.0 1096.2,481.3 1090.1,464.6 C1084.0,447.8 1077.6,428.0 1071.6,406.1 C1065.6,384.2 1059.1,358.3 1054.2,333.1 C1049.2,308.0 1044.6,280.2 1042.0,255.2 C1039.4,230.2 1037.8,204.9 1038.6,183.0 C1039.4,161.1 1041.9,140.1 1046.5,123.9 C1051.2,107.6 1058.4,94.2 1066.4,85.6 C1074.4,76.9 1084.6,73.5 1094.5,72.0 C1104.5,70.6 1115.6,73.9 1126.2,76.8 C1136.9,79.6 1148.0,84.7 1158.4,89.3 C1168.8,94.0 1178.8,99.1 1188.8,104.4 C1198.7,109.7 1208.3,115.4 1217.9,121.3 C1227.6,127.3 1237.1,133.5 1246.7,139.9 C1256.2,146.3 1265.7,153.0 1275.1,159.8 C1284.6,166.5 1294.0,173.5 1303.5,180.5 C1313.0,187.5 1322.5,194.6 1331.9,201.8 C1341.4,209.0 1350.8,216.2 1360.2,223.4 C1369.6,230.7 1379.1,237.9 1388.3,245.1 C1397.6,252.3 1406.8,259.4 1415.9,266.5 C1425.0,273.5 1433.9,280.5 1442.7,287.3 C1451.4,294.1 1460.0,300.8 1468.3,307.3 C1476.6,313.7 1484.8,320.0 1492.5,326.0 C1500.2,332.0 1507.6,337.8 1514.5,343.2 C1521.4,348.5 1527.7,353.4 1533.7,358.1 C1539.6,362.7 1545.4,367.2 1550.5,371.1 C1555.6,375.1 1560.3,378.6 1564.5,381.9 C1568.7,385.2 1572.4,388.1 1575.8,390.8 C1579.2,393.4 1582.2,395.7 1584.9,397.9 C1587.6,400.0 1590.0,401.7 1592.1,403.4 C1594.3,405.1 1596.2,406.6 1597.9,408.0 C1599.7,409.3 1601.3,410.6 1602.8,411.7 C1604.2,412.9 1605.6,413.9 1606.7,414.8 C1607.9,415.8 1609.0,416.5 1609.9,417.3 C1610.9,418.0 1611.4,418.4 1612.3,419.1 C1613.2,419.8 1614.3,420.7 1615.5,421.6 C1616.6,422.5 1618.6,424.0 1619.2,424.5 Z" fill="url(#fbv)"/>
<clipPath id="fbclip"><path d="M1173.8,585.9 C1173.8,585.9 1173.7,585.9 1173.6,586.0 C1173.5,586.0 1173.3,586.0 1173.2,586.0 C1173.0,586.0 1172.9,586.1 1172.6,586.0 C1172.4,586.0 1172.0,585.9 1171.7,585.8 C1171.4,585.7 1171.1,585.6 1170.8,585.4 C1170.5,585.2 1170.1,585.0 1169.7,584.7 C1169.2,584.4 1168.7,584.1 1168.1,583.7 C1167.5,583.3 1166.9,582.8 1166.1,582.2 C1165.3,581.7 1164.5,581.1 1163.5,580.4 C1162.5,579.7 1161.3,578.9 1159.9,578.0 C1158.6,577.1 1157.1,576.2 1155.5,574.9 C1153.8,573.7 1152.0,572.4 1149.9,570.6 C1147.9,568.8 1145.8,567.2 1143.2,564.3 C1140.5,561.4 1137.5,558.0 1134.1,553.2 C1130.7,548.3 1126.9,542.9 1122.6,535.2 C1118.2,527.4 1113.5,518.5 1108.0,506.7 C1102.6,495.0 1096.2,481.3 1090.1,464.6 C1084.0,447.8 1077.6,428.0 1071.6,406.1 C1065.6,384.2 1059.1,358.3 1054.2,333.1 C1049.2,308.0 1044.6,280.2 1042.0,255.2 C1039.4,230.2 1037.8,204.9 1038.6,183.0 C1039.4,161.1 1041.9,140.1 1046.5,123.9 C1051.2,107.6 1058.4,94.2 1066.4,85.6 C1074.4,76.9 1084.6,73.5 1094.5,72.0 C1104.5,70.6 1115.6,73.9 1126.2,76.8 C1136.9,79.6 1148.0,84.7 1158.4,89.3 C1168.8,94.0 1178.8,99.1 1188.8,104.4 C1198.7,109.7 1208.3,115.4 1217.9,121.3 C1227.6,127.3 1237.1,133.5 1246.7,139.9 C1256.2,146.3 1265.7,153.0 1275.1,159.8 C1284.6,166.5 1294.0,173.5 1303.5,180.5 C1313.0,187.5 1322.5,194.6 1331.9,201.8 C1341.4,209.0 1350.8,216.2 1360.2,223.4 C1369.6,230.7 1379.1,237.9 1388.3,245.1 C1397.6,252.3 1406.8,259.4 1415.9,266.5 C1425.0,273.5 1433.9,280.5 1442.7,287.3 C1451.4,294.1 1460.0,300.8 1468.3,307.3 C1476.6,313.7 1484.8,320.0 1492.5,326.0 C1500.2,332.0 1507.6,337.8 1514.5,343.2 C1521.4,348.5 1527.7,353.4 1533.7,358.1 C1539.6,362.7 1545.4,367.2 1550.5,371.1 C1555.6,375.1 1560.3,378.6 1564.5,381.9 C1568.7,385.2 1572.4,388.1 1575.8,390.8 C1579.2,393.4 1582.2,395.7 1584.9,397.9 C1587.6,400.0 1590.0,401.7 1592.1,403.4 C1594.3,405.1 1596.2,406.6 1597.9,408.0 C1599.7,409.3 1601.3,410.6 1602.8,411.7 C1604.2,412.9 1605.6,413.9 1606.7,414.8 C1607.9,415.8 1609.0,416.5 1609.9,417.3 C1610.9,418.0 1611.4,418.4 1612.3,419.1 C1613.2,419.8 1614.3,420.7 1615.5,421.6 C1616.6,422.5 1618.6,424.0 1619.2,424.5 Z"/></clipPath>
<polygon clip-path="url(#fbclip)" points="1273.8,217.0 1544.0,384.4 1700,445 1700,68 1300,68" fill="url(#fbr)"/>
<polygon clip-path="url(#fbclip)" points="1154.7,551.8 1544.0,384.4 1700,430 1700,589 1100,589" fill="url(#fbb)"/>
<polygon points="1273.8,217.0 1544.0,384.4 1154.7,551.8" fill="url(#fbt)"/>
<defs><linearGradient id="fbi1" x1="1513" y1="257" x2="1704" y2="68" gradientUnits="userSpaceOnUse"><stop offset="0" stop-color="#c8ff00"/><stop offset="0.5" stop-color="#ffff10"/><stop offset="1" stop-color="#ffb000"/></linearGradient><linearGradient id="fbi2" x1="1513" y1="68" x2="1704" y2="257" gradientUnits="userSpaceOnUse"><stop offset="0" stop-color="#6a9000"/><stop offset="0.5" stop-color="#929000"/><stop offset="1" stop-color="#8a6400"/></linearGradient></defs>
<polygon points="1513,68 1704,68 1704,238 1513,88" fill="url(#fbi2)"/>
<polygon points="1513,88 1704,238 1704,257 1513,257" fill="url(#fbi1)"/>
</svg>
<canvas id="cie" class="layer" width="1712" height="885"></canvas>
<svg class="layer" width="1712" height="885" viewBox="0 0 1712 885">
<rect x="1266.50" y="209.50" width="14" height="14" fill="#00ff00" fill-opacity="0.55" stroke="#ffffff" stroke-width="1.6"/>
<rect x="1268.70" y="245.70" width="14" height="14" fill="#18ff19" fill-opacity="0.55" stroke="#ffffff" stroke-width="1.6"/>
<rect x="1270.70" y="277.90" width="14" height="14" fill="#35ff36" fill-opacity="0.55" stroke="#ffffff" stroke-width="1.6"/>
<rect x="1272.70" y="310.80" width="14" height="14" fill="#5eff5f" fill-opacity="0.55" stroke="#ffffff" stroke-width="1.6"/>
<rect x="1274.00" y="343.60" width="14" height="14" fill="#97ff9a" fill-opacity="0.55" stroke="#ffffff" stroke-width="1.6"/>
<rect x="1360.90" y="267.70" width="14" height="14" fill="#fbff00" fill-opacity="0.55" stroke="#ffffff" stroke-width="1.6"/>
<rect x="1342.90" y="290.80" width="14" height="14" fill="#faff23" fill-opacity="0.55" stroke="#ffffff" stroke-width="1.6"/>
<rect x="1328.00" y="311.10" width="14" height="14" fill="#fcff47" fill-opacity="0.55" stroke="#ffffff" stroke-width="1.6"/>
<rect x="1310.20" y="332.80" width="14" height="14" fill="#f8ff76" fill-opacity="0.55" stroke="#ffffff" stroke-width="1.6"/>
<rect x="1293.90" y="355.20" width="14" height="14" fill="#fcffb2" fill-opacity="0.55" stroke="#ffffff" stroke-width="1.6"/>
<rect x="1536.80" y="376.50" width="14" height="14" fill="#ff0100" fill-opacity="0.55" stroke="#ffffff" stroke-width="1.6"/>
<rect x="1479.40" y="376.50" width="14" height="14" fill="#ff0f0e" fill-opacity="0.55" stroke="#ffffff" stroke-width="1.6"/>
<rect x="1428.70" y="376.50" width="14" height="14" fill="#ff2221" fill-opacity="0.55" stroke="#ffffff" stroke-width="1.6"/>
<rect x="1381.00" y="376.50" width="14" height="14" fill="#ff3f3d" fill-opacity="0.55" stroke="#ffffff" stroke-width="1.6"/>
<rect x="1327.50" y="378.00" width="14" height="14" fill="#ff7777" fill-opacity="0.55" stroke="#ffffff" stroke-width="1.6"/>
<rect x="1278.30" y="398.90" width="14" height="14" fill="#ffb7ff" fill-opacity="0.55" stroke="#ffffff" stroke-width="1.6"/>
<rect x="1279.40" y="421.30" width="14" height="14" fill="#fe7aff" fill-opacity="0.55" stroke="#ffffff" stroke-width="1.6"/>
<rect x="1279.40" y="441.20" width="14" height="14" fill="#fa4eff" fill-opacity="0.55" stroke="#ffffff" stroke-width="1.6"/>
<rect x="1281.20" y="463.30" width="14" height="14" fill="#fc25ff" fill-opacity="0.55" stroke="#ffffff" stroke-width="1.6"/>
<rect x="1282.70" y="485.70" width="14" height="14" fill="#fd01ff" fill-opacity="0.55" stroke="#ffffff" stroke-width="1.6"/>
<rect x="1250.50" y="410.90" width="14" height="14" fill="#9a9eff" fill-opacity="0.55" stroke="#ffffff" stroke-width="1.6"/>
<rect x="1225.20" y="443.00" width="14" height="14" fill="#5e62ff" fill-opacity="0.55" stroke="#ffffff" stroke-width="1.6"/>
<rect x="1200.20" y="475.60" width="14" height="14" fill="#3638ff" fill-opacity="0.55" stroke="#ffffff" stroke-width="1.6"/>
<rect x="1174.60" y="508.10" width="14" height="14" fill="#171aff" fill-opacity="0.55" stroke="#ffffff" stroke-width="1.6"/>
<rect x="1146.90" y="544.40" width="14" height="14" fill="#0001ff" fill-opacity="0.55" stroke="#ffffff" stroke-width="1.6"/>
<rect x="1207.30" y="378.00" width="14" height="14" fill="#01fffe" fill-opacity="0.55" stroke="#ffffff" stroke-width="1.6"/>
<rect x="1221.30" y="378.00" width="14" height="14" fill="#2bffff" fill-opacity="0.55" stroke="#ffffff" stroke-width="1.6"/>
<rect x="1235.20" y="378.00" width="14" height="14" fill="#58ffff" fill-opacity="0.55" stroke="#ffffff" stroke-width="1.6"/>
<rect x="1249.00" y="378.00" width="14" height="14" fill="#8affff" fill-opacity="0.55" stroke="#ffffff" stroke-width="1.6"/>
<rect x="1263.00" y="378.00" width="14" height="14" fill="#c2ffff" fill-opacity="0.55" stroke="#ffffff" stroke-width="1.6"/>
<rect x="1277.5" y="378.2" width="13.6" height="13.6" fill="#f4f4f4" fill-opacity="0.5" stroke="#000000" stroke-width="1.9"/>
<circle cx="1274.3" cy="216.1" r="4.5" fill="#20c120" stroke="#000" stroke-width="1.3"/>
<circle cx="1276.7" cy="252.7" r="4.5" fill="#30c12f" stroke="#000" stroke-width="1.3"/>
<circle cx="1278.7" cy="284.9" r="4.5" fill="#43c142" stroke="#000" stroke-width="1.3"/>
<circle cx="1280.0" cy="318.5" r="4.5" fill="#5cc15c" stroke="#000" stroke-width="1.3"/>
<circle cx="1282.8" cy="350.6" r="4.5" fill="#83c181" stroke="#000" stroke-width="1.3"/>
<circle cx="1366.2" cy="273.7" r="4.5" fill="#bac120" stroke="#000" stroke-width="1.3"/>
<circle cx="1348.6" cy="297.8" r="4.5" fill="#bbc136" stroke="#000" stroke-width="1.3"/>
<circle cx="1333.3" cy="318.5" r="4.5" fill="#bcc14e" stroke="#000" stroke-width="1.3"/>
<circle cx="1316.8" cy="339.8" r="4.5" fill="#bcc16b" stroke="#000" stroke-width="1.3"/>
<circle cx="1299.4" cy="362.2" r="4.5" fill="#bbc190" stroke="#000" stroke-width="1.3"/>
<circle cx="1539.9" cy="385.0" r="4.5" fill="#c12021" stroke="#000" stroke-width="1.3"/>
<circle cx="1480.6" cy="385.0" r="4.5" fill="#c12a2a" stroke="#000" stroke-width="1.3"/>
<circle cx="1432.0" cy="385.0" r="4.5" fill="#c13636" stroke="#000" stroke-width="1.3"/>
<circle cx="1384.0" cy="385.0" r="4.5" fill="#c14949" stroke="#000" stroke-width="1.3"/>
<circle cx="1332.0" cy="385.0" r="4.5" fill="#c16e6e" stroke="#000" stroke-width="1.3"/>
<circle cx="1283.5" cy="407.0" r="4.5" fill="#bc92c1" stroke="#000" stroke-width="1.3"/>
<circle cx="1285.7" cy="429.4" r="4.5" fill="#bf6bc1" stroke="#000" stroke-width="1.3"/>
<circle cx="1286.4" cy="448.6" r="4.5" fill="#be51c1" stroke="#000" stroke-width="1.3"/>
<circle cx="1288.2" cy="472.8" r="4.5" fill="#bf34c1" stroke="#000" stroke-width="1.3"/>
<circle cx="1289.7" cy="496.3" r="4.5" fill="#bf20c1" stroke="#000" stroke-width="1.3"/>
<circle cx="1258.6" cy="418.2" r="4.5" fill="#8383c1" stroke="#000" stroke-width="1.3"/>
<circle cx="1234.4" cy="451.8" r="4.5" fill="#5f5bc1" stroke="#000" stroke-width="1.3"/>
<circle cx="1211.2" cy="483.7" r="4.5" fill="#4742c1" stroke="#000" stroke-width="1.3"/>
<circle cx="1185.6" cy="517.6" r="4.5" fill="#342ec1" stroke="#000" stroke-width="1.3"/>
<circle cx="1159.3" cy="554.3" r="4.5" fill="#2520c1" stroke="#000" stroke-width="1.3"/>
<circle cx="1216.8" cy="385.0" r="4.5" fill="#25c1c0" stroke="#000" stroke-width="1.3"/>
<circle cx="1230.9" cy="385.0" r="4.5" fill="#40c1c0" stroke="#000" stroke-width="1.3"/>
<circle cx="1243.9" cy="385.0" r="4.5" fill="#5bc1c0" stroke="#000" stroke-width="1.3"/>
<circle cx="1257.9" cy="385.0" r="4.5" fill="#7cc1c0" stroke="#000" stroke-width="1.3"/>
<circle cx="1270.0" cy="385.0" r="4.5" fill="#9ac1c1" stroke="#000" stroke-width="1.3"/>
<circle cx="1284" cy="385" r="4.5" fill="#ffffff" stroke="#000" stroke-width="1.3"/>
<rect x="1513.2" y="68.2" width="190.6" height="188.6" fill="none" stroke="#a0a0a0" stroke-width="1.6"/>
<circle cx="1593" cy="154.1" r="4.8" fill="#9a9a10" fill-opacity="0.6" stroke="#000" stroke-width="1.4"/>
<rect x="1600.9" y="155.2" width="14" height="14" fill="none" stroke="#ffffff" stroke-width="1.7"/>
<rect x="1001" y="634" width="17" height="32" fill="#000000"/>
<rect x="1018" y="634" width="510" height="16" fill="#2f2f2f"/>
<rect x="1018" y="650" width="510" height="16" fill="#141414"/>
<rect x="1018" y="666" width="510" height="29.200000000000045" fill="#424242"/>
<rect x="1001" y="666" width="17" height="29.200000000000045" fill="#272727"/>
<rect x="1018" y="695.2" width="510" height="29.199999999999932" fill="#808080"/>
<rect x="1001" y="695.2" width="17" height="29.199999999999932" fill="#1f1f1f"/>
<rect x="1018" y="724.4" width="510" height="29.200000000000045" fill="#424242"/>
<rect x="1001" y="724.4" width="17" height="29.200000000000045" fill="#272727"/>
<rect x="1018" y="753.6" width="510" height="29.199999999999932" fill="#808080"/>
<rect x="1001" y="753.6" width="17" height="29.199999999999932" fill="#1f1f1f"/>
<rect x="1018" y="782.8" width="510" height="29.200000000000045" fill="#424242"/>
<rect x="1001" y="782.8" width="17" height="29.200000000000045" fill="#272727"/>
<rect x="1018" y="812" width="510" height="29.200000000000045" fill="#808080"/>
<rect x="1001" y="812" width="17" height="29.200000000000045" fill="#1f1f1f"/>
<text x="1165.5" y="657.2" font-size="17" fill="#ffffff" text-anchor="start" font-weight="normal" textLength="36.5" lengthAdjust="spacingAndGlyphs" stroke="#ffffff" stroke-width="0.3" stroke-opacity="0.7">20%</text>
<text x="1238.6" y="657.2" font-size="17" fill="#ffffff" text-anchor="start" font-weight="normal" textLength="36.5" lengthAdjust="spacingAndGlyphs" stroke="#ffffff" stroke-width="0.3" stroke-opacity="0.7">40%</text>
<text x="1311.9" y="657.2" font-size="17" fill="#ffffff" text-anchor="start" font-weight="normal" textLength="36.5" lengthAdjust="spacingAndGlyphs" stroke="#ffffff" stroke-width="0.3" stroke-opacity="0.7">60%</text>
<text x="1385.2" y="657.2" font-size="17" fill="#ffffff" text-anchor="start" font-weight="normal" textLength="36.5" lengthAdjust="spacingAndGlyphs" stroke="#ffffff" stroke-width="0.3" stroke-opacity="0.7">80%</text>
<text x="1459.3" y="657.2" font-size="17" fill="#ffffff" text-anchor="start" font-weight="normal" textLength="47.5" lengthAdjust="spacingAndGlyphs" stroke="#ffffff" stroke-width="0.3" stroke-opacity="0.7">100%</text>
<text x="1022.5" y="687.6" font-size="17" fill="#ffffff" text-anchor="start" font-weight="normal" textLength="74.2" lengthAdjust="spacingAndGlyphs" stroke="#ffffff" stroke-width="0.3" stroke-opacity="0.7">x: CIE31</text>
<text x="1165.5" y="687.6" font-size="17" fill="#ffffff" text-anchor="start" font-weight="normal" textLength="38.7" lengthAdjust="spacingAndGlyphs" stroke="#ffffff" stroke-width="0.3" stroke-opacity="0.7">0,33</text>
<text x="1238.6" y="687.6" font-size="17" fill="#ffffff" text-anchor="start" font-weight="normal" textLength="38.7" lengthAdjust="spacingAndGlyphs" stroke="#ffffff" stroke-width="0.3" stroke-opacity="0.7">0,35</text>
<text x="1311.9" y="687.6" font-size="17" fill="#ffffff" text-anchor="start" font-weight="normal" textLength="38.7" lengthAdjust="spacingAndGlyphs" stroke="#ffffff" stroke-width="0.3" stroke-opacity="0.7">0,37</text>
<text x="1385.2" y="687.6" font-size="17" fill="#ffffff" text-anchor="start" font-weight="normal" textLength="38.7" lengthAdjust="spacingAndGlyphs" stroke="#ffffff" stroke-width="0.3" stroke-opacity="0.7">0,39</text>
<text x="1459.3" y="687.6" font-size="17" fill="#ffffff" text-anchor="start" font-weight="normal" textLength="38.7" lengthAdjust="spacingAndGlyphs" stroke="#ffffff" stroke-width="0.3" stroke-opacity="0.7">0,42</text>
<text x="1022.5" y="716.8000000000001" font-size="17" fill="#ffffff" text-anchor="start" font-weight="normal" textLength="74.2" lengthAdjust="spacingAndGlyphs" stroke="#ffffff" stroke-width="0.3" stroke-opacity="0.7">y: CIE31</text>
<text x="1165.5" y="716.8000000000001" font-size="17" fill="#ffffff" text-anchor="start" font-weight="normal" textLength="38.7" lengthAdjust="spacingAndGlyphs" stroke="#ffffff" stroke-width="0.3" stroke-opacity="0.7">0,36</text>
<text x="1238.6" y="716.8000000000001" font-size="17" fill="#ffffff" text-anchor="start" font-weight="normal" textLength="38.7" lengthAdjust="spacingAndGlyphs" stroke="#ffffff" stroke-width="0.3" stroke-opacity="0.7">0,40</text>
<text x="1311.9" y="716.8000000000001" font-size="17" fill="#ffffff" text-anchor="start" font-weight="normal" textLength="38.7" lengthAdjust="spacingAndGlyphs" stroke="#ffffff" stroke-width="0.3" stroke-opacity="0.7">0,44</text>
<text x="1385.2" y="716.8000000000001" font-size="17" fill="#ffffff" text-anchor="start" font-weight="normal" textLength="38.7" lengthAdjust="spacingAndGlyphs" stroke="#ffffff" stroke-width="0.3" stroke-opacity="0.7">0,47</text>
<text x="1459.3" y="716.8000000000001" font-size="17" fill="#ffffff" text-anchor="start" font-weight="normal" textLength="38.7" lengthAdjust="spacingAndGlyphs" stroke="#ffffff" stroke-width="0.3" stroke-opacity="0.7">0,51</text>
<text x="1022.5" y="746.0" font-size="17" fill="#ffffff" text-anchor="start" font-weight="normal" textLength="13.2" lengthAdjust="spacingAndGlyphs" stroke="#ffffff" stroke-width="0.3" stroke-opacity="0.7">Y</text>
<text x="1165.5" y="746.0" font-size="17" fill="#ffffff" text-anchor="start" font-weight="normal" textLength="60.8" lengthAdjust="spacingAndGlyphs" stroke="#ffffff" stroke-width="0.3" stroke-opacity="0.7">192,54</text>
<text x="1238.6" y="746.0" font-size="17" fill="#ffffff" text-anchor="start" font-weight="normal" textLength="60.8" lengthAdjust="spacingAndGlyphs" stroke="#ffffff" stroke-width="0.3" stroke-opacity="0.7">189,02</text>
<text x="1311.9" y="746.0" font-size="17" fill="#ffffff" text-anchor="start" font-weight="normal" textLength="60.8" lengthAdjust="spacingAndGlyphs" stroke="#ffffff" stroke-width="0.3" stroke-opacity="0.7">186,30</text>
<text x="1385.2" y="746.0" font-size="17" fill="#ffffff" text-anchor="start" font-weight="normal" textLength="60.8" lengthAdjust="spacingAndGlyphs" stroke="#ffffff" stroke-width="0.3" stroke-opacity="0.7">183,91</text>
<text x="1459.3" y="746.0" font-size="17" fill="#ffffff" text-anchor="start" font-weight="normal" textLength="60.8" lengthAdjust="spacingAndGlyphs" stroke="#ffffff" stroke-width="0.3" stroke-opacity="0.7">179,41</text>
<text x="1022.5" y="775.2" font-size="17" fill="#ffffff" text-anchor="start" font-weight="normal" textLength="127.7" lengthAdjust="spacingAndGlyphs" stroke="#ffffff" stroke-width="0.3" stroke-opacity="0.7">Target x:CIE31</text>
<text x="1165.5" y="775.2" font-size="17" fill="#ffffff" text-anchor="start" font-weight="normal" textLength="38.7" lengthAdjust="spacingAndGlyphs" stroke="#ffffff" stroke-width="0.3" stroke-opacity="0.7">0,33</text>
<text x="1238.6" y="775.2" font-size="17" fill="#ffffff" text-anchor="start" font-weight="normal" textLength="38.7" lengthAdjust="spacingAndGlyphs" stroke="#ffffff" stroke-width="0.3" stroke-opacity="0.7">0,36</text>
<text x="1311.9" y="775.2" font-size="17" fill="#ffffff" text-anchor="start" font-weight="normal" textLength="38.7" lengthAdjust="spacingAndGlyphs" stroke="#ffffff" stroke-width="0.3" stroke-opacity="0.7">0,38</text>
<text x="1385.2" y="775.2" font-size="17" fill="#ffffff" text-anchor="start" font-weight="normal" textLength="38.7" lengthAdjust="spacingAndGlyphs" stroke="#ffffff" stroke-width="0.3" stroke-opacity="0.7">0,40</text>
<text x="1459.3" y="775.2" font-size="17" fill="#ffffff" text-anchor="start" font-weight="normal" textLength="38.7" lengthAdjust="spacingAndGlyphs" stroke="#ffffff" stroke-width="0.3" stroke-opacity="0.7">0,42</text>
<text x="1022.5" y="804.4" font-size="17" fill="#ffffff" text-anchor="start" font-weight="normal" textLength="127.7" lengthAdjust="spacingAndGlyphs" stroke="#ffffff" stroke-width="0.3" stroke-opacity="0.7">Target y:CIE31</text>
<text x="1165.5" y="804.4" font-size="17" fill="#ffffff" text-anchor="start" font-weight="normal" textLength="38.7" lengthAdjust="spacingAndGlyphs" stroke="#ffffff" stroke-width="0.3" stroke-opacity="0.7">0,36</text>
<text x="1238.6" y="804.4" font-size="17" fill="#ffffff" text-anchor="start" font-weight="normal" textLength="38.7" lengthAdjust="spacingAndGlyphs" stroke="#ffffff" stroke-width="0.3" stroke-opacity="0.7">0,40</text>
<text x="1311.9" y="804.4" font-size="17" fill="#ffffff" text-anchor="start" font-weight="normal" textLength="38.7" lengthAdjust="spacingAndGlyphs" stroke="#ffffff" stroke-width="0.3" stroke-opacity="0.7">0,44</text>
<text x="1385.2" y="804.4" font-size="17" fill="#ffffff" text-anchor="start" font-weight="normal" textLength="38.7" lengthAdjust="spacingAndGlyphs" stroke="#ffffff" stroke-width="0.3" stroke-opacity="0.7">0,47</text>
<text x="1459.3" y="804.4" font-size="17" fill="#ffffff" text-anchor="start" font-weight="normal" textLength="38.7" lengthAdjust="spacingAndGlyphs" stroke="#ffffff" stroke-width="0.3" stroke-opacity="0.7">0,51</text>
<text x="1022.5" y="833.6" font-size="17" fill="#ffffff" text-anchor="start" font-weight="normal" textLength="71.7" lengthAdjust="spacingAndGlyphs" stroke="#ffffff" stroke-width="0.3" stroke-opacity="0.7">Target Y</text>
<text x="1165.5" y="833.6" font-size="17" fill="#ffffff" text-anchor="start" font-weight="normal" textLength="60.8" lengthAdjust="spacingAndGlyphs" stroke="#ffffff" stroke-width="0.3" stroke-opacity="0.7">193,87</text>
<text x="1238.6" y="833.6" font-size="17" fill="#ffffff" text-anchor="start" font-weight="normal" textLength="60.8" lengthAdjust="spacingAndGlyphs" stroke="#ffffff" stroke-width="0.3" stroke-opacity="0.7">190,47</text>
<text x="1311.9" y="833.6" font-size="17" fill="#ffffff" text-anchor="start" font-weight="normal" textLength="60.8" lengthAdjust="spacingAndGlyphs" stroke="#ffffff" stroke-width="0.3" stroke-opacity="0.7">187,86</text>
<text x="1385.2" y="833.6" font-size="17" fill="#ffffff" text-anchor="start" font-weight="normal" textLength="60.8" lengthAdjust="spacingAndGlyphs" stroke="#ffffff" stroke-width="0.3" stroke-opacity="0.7">185,80</text>
<text x="1459.3" y="833.6" font-size="17" fill="#ffffff" text-anchor="start" font-weight="normal" textLength="60.8" lengthAdjust="spacingAndGlyphs" stroke="#ffffff" stroke-width="0.3" stroke-opacity="0.7">183,82</text>
<g opacity="0.85">
<path d="M1327,804 L1378,814 L1380,845 L1340,848 M1327,804 L1330,854 L1360,868 L1416,852 L1385,846" fill="none" stroke="#b0b0b0" stroke-width="7.5" stroke-linejoin="round" stroke-linecap="round"/>
<path d="M1342,818 Q1350,812 1356,839 L1384,802" fill="none" stroke="#b0b0b0" stroke-width="6" stroke-linecap="round" stroke-linejoin="round"/>
<text x="1384" y="840.5" font-size="36" font-weight="bold" fill="#b4b4b4" stroke="#b4b4b4" stroke-width="5" stroke-linejoin="round" textLength="199" lengthAdjust="spacingAndGlyphs">NOTEBOOK</text>
<path d="M1327,804 L1378,814 L1380,845 L1340,848 M1327,804 L1330,854 L1360,868 L1416,852 L1385,846" fill="none" stroke="#8e3a3a" stroke-width="4.5" stroke-linejoin="round" stroke-linecap="round"/>
<path d="M1342,818 Q1350,812 1356,839 L1384,802" fill="none" stroke="#444444" stroke-width="3.6" stroke-linecap="round" stroke-linejoin="round"/>
<text x="1384" y="840.5" font-size="36" font-weight="bold" fill="#983e3e" stroke="#983e3e" stroke-width="2.4" stroke-linejoin="round" textLength="199" lengthAdjust="spacingAndGlyphs">NOTEBOOK</text>
</g>
<text x="1584" y="840.5" font-size="36" font-weight="bold" fill="#a8a8a8" stroke="#a8a8a8" stroke-width="4.6" stroke-linejoin="round" textLength="118" lengthAdjust="spacingAndGlyphs">CHECK</text>
<text x="1584" y="840.5" font-size="36" font-weight="bold" fill="#2a2a2a" stroke="#2a2a2a" stroke-width="1.6" stroke-linejoin="round" textLength="118" lengthAdjust="spacingAndGlyphs">CHECK</text>
</svg>
<script>
(function(){
var cv=document.getElementById('cie'); var ctx=cv.getContext('2d');
var X0=1035.5, SX=794.5, Y0=589.0, SY=620.0;
var LOC=[[0.1741,0.0050],[0.1738,0.0049],[0.1733,0.0048],[0.1726,0.0048],[0.1714,0.0051],[0.1703,0.0058],[0.1689,0.0069],[0.1669,0.0086],[0.1644,0.0109],[0.1611,0.0138],[0.1566,0.0177],[0.1510,0.0227],[0.1440,0.0297],[0.1355,0.0399],[0.1241,0.0578],[0.1096,0.0868],[0.0913,0.1327],[0.0687,0.2007],[0.0454,0.2950],[0.0235,0.4127],[0.0082,0.5384],[0.0039,0.6548],[0.0139,0.7502],[0.0389,0.8120],[0.0743,0.8338],[0.1142,0.8262],[0.1547,0.8059],[0.1929,0.7816],[0.2296,0.7543],[0.2658,0.7243],[0.3016,0.6923],[0.3373,0.6589],[0.3731,0.6245],[0.4087,0.5896],[0.4441,0.5547],[0.4788,0.5202],[0.5125,0.4866],[0.5448,0.4544],[0.5752,0.4242],[0.6029,0.3965],[0.6270,0.3725],[0.6482,0.3514],[0.6658,0.3340],[0.6801,0.3197],[0.6915,0.3083],[0.7006,0.2993],[0.7079,0.2920],[0.7140,0.2859],[0.7190,0.2809],[0.7230,0.2770],[0.7260,0.2740],[0.7300,0.2700],[0.7347,0.2653]];
var R=[0.64,0.33], G=[0.30,0.60], B=[0.15,0.06];
var DIM=0.6;
function col(x,y,out){
  if(y<=0.0005) y=0.0005;
  var X=x/y, Z=(1-x-y)/y;
  var r=3.2406*X-1.5372-0.4986*Z, g=-0.9689*X+1.8758+0.0415*Z, b=0.0557*X-0.2040+1.0570*Z;
  var inside = r>=0 && g>=0 && b>=0;
  if(r<0)r=0; if(g<0)g=0; if(b<0)b=0;
  var m=Math.max(r,g,b); if(m<=0){out[0]=out[1]=out[2]=0;return;}
  var k=(inside?255:255*DIM)/m;
  out[0]=r*k; out[1]=g*k; out[2]=b*k;
}
function render(x0,y0,w,h,mapx,mapy,clipFn){
  var off=document.createElement('canvas'); off.width=w; off.height=h;
  var oc=off.getContext('2d'); var img=oc.createImageData(w,h); var d=img.data; var c=[0,0,0];
  var N=3;
  for(var j=0;j<h;j++){ for(var i=0;i<w;i++){
     var sr=0,sg=0,sb=0;
     for(var a=0;a<N;a++){ for(var bb=0;bb<N;bb++){
       col(mapx(x0+i+(a+0.5)/N), mapy(y0+j+(bb+0.5)/N), c); sr+=c[0]; sg+=c[1]; sb+=c[2]; } }
     var p=(j*w+i)*4; d[p]=sr/(N*N); d[p+1]=sg/(N*N); d[p+2]=sb/(N*N); d[p+3]=255; } }
  oc.putImageData(img,0,0);
  ctx.save(); clipFn(); ctx.clip(); ctx.drawImage(off,x0,y0); ctx.restore();
}
// main locus
render(1036,69,640,520,function(px){return (px-X0)/SX;},function(py){return (Y0-py)/SY;},function(){
  ctx.beginPath();
  var P=[]; for(var i=0;i<LOC.length;i++){ P.push([X0+SX*LOC[i][0], Y0-SY*LOC[i][1]]); }
  ctx.moveTo(P[0][0],P[0][1]);
  for(var i=0;i<P.length-1;i++){
    var p0=P[Math.max(i-1,0)], p1=P[i], p2=P[i+1], p3=P[Math.min(i+2,P.length-1)];
    var T=6;
    ctx.bezierCurveTo(p1[0]+(p2[0]-p0[0])/T, p1[1]+(p2[1]-p0[1])/T, p2[0]-(p3[0]-p1[0])/T, p2[1]-(p3[1]-p1[1])/T, p2[0], p2[1]);
  }
  ctx.closePath();
});
// inset
var IX=0.4193, IY=0.5053, IS=3700, ICX=1607.9, ICY=162.2;
render(1513,68,191,189,function(px){return IX+(px-ICX)/IS;},function(py){return IY-(py-ICY)/IS;},function(){
  ctx.beginPath(); ctx.rect(1513,68,191,189);
});
})();
</script>
</body></html>
